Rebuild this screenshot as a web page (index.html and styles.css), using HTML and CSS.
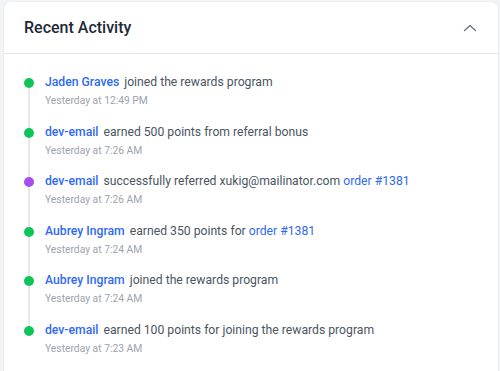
FILE: index.html
```html
<!DOCTYPE html>
<html>
<head>
<meta charset="utf-8">
<link rel="stylesheet" href="styles.css">
</head>
<body>
<section class="card">
  <header class="card-header">
    <h2 class="title">Recent Activity</h2>
    <svg class="chevron" width="14" height="14" viewBox="0 0 14 14"><path d="M1.5 9.5 L7 4.5 L12.5 9.5" fill="none" stroke="#6b7280" stroke-width="1.3" stroke-linecap="round" stroke-linejoin="round"/></svg>
  </header>
  <ul class="timeline">
    <li class="item">
      <span class="dot green"></span>
      <div class="body">
        <p class="line"><a class="link">Jaden Graves</a> joined the rewards program</p>
        <p class="time">Yesterday at 12:49 PM</p>
      </div>
    </li>
    <li class="item">
      <span class="dot green"></span>
      <div class="body">
        <p class="line"><a class="link">dev-email</a> earned 500 points from referral bonus</p>
        <p class="time">Yesterday at 7:26 AM</p>
      </div>
    </li>
    <li class="item">
      <span class="dot purple"></span>
      <div class="body">
        <p class="line"><a class="link">dev-email</a> successfully referred xukig@mailinator.com <a class="link plain">order #1381</a></p>
        <p class="time">Yesterday at 7:26 AM</p>
      </div>
    </li>
    <li class="item">
      <span class="dot green"></span>
      <div class="body">
        <p class="line"><a class="link">Aubrey Ingram</a> earned 350 points for <a class="link plain">order #1381</a></p>
        <p class="time">Yesterday at 7:24 AM</p>
      </div>
    </li>
    <li class="item">
      <span class="dot green"></span>
      <div class="body">
        <p class="line"><a class="link">Aubrey Ingram</a> joined the rewards program</p>
        <p class="time">Yesterday at 7:24 AM</p>
      </div>
    </li>
    <li class="item last">
      <span class="dot green"></span>
      <div class="body">
        <p class="line"><a class="link">dev-email</a> earned 100 points for joining the rewards program</p>
        <p class="time">Yesterday at 7:23 AM</p>
      </div>
    </li>
  </ul>
</section>
</body>
</html>
```

FILE: styles.css
```css
* { box-sizing: border-box; }
html, body { margin: 0; padding: 0; }
body {
  background: #f3f4f6;
  font-family: Roboto, "Noto Sans", sans-serif;
  padding: 1px 0 0 3px;
  overflow: hidden;
  height: 371px;
}
.card {
  background: #fff;
  width: 496px;
  height: 380px;
  border: 1px solid #eceef1;
  border-radius: 8px;
}
.card-header {
  height: 52px;
  display: flex;
  align-items: center;
  justify-content: space-between;
  padding: 0 21px 0 20px;
  border-bottom: 1px solid #e5e7eb;
}
.title {
  margin: 0;
  font-size: 16px;
  font-weight: 500;
  color: #1f2937;
}
.timeline {
  list-style: none;
  margin: 0;
  padding: 19px 0 0 20px;
}
.item {
  position: relative;
  display: flex;
  gap: 11px;
  height: 49.5px;
}
.item::before {
  content: "";
  position: absolute;
  left: 4px;
  top: 14px;
  bottom: -6px;
  width: 2px;
  background: #e5e7eb;
}
.item.last::before { display: none; }
.dot {
  width: 10px;
  height: 10px;
  border-radius: 50%;
  margin-top: 5px;
  flex: none;
  position: relative;
  z-index: 1;
}
.dot.green { background: #10c45c; }
.dot.purple { background: #a44ff0; }
.body { min-width: 0; }
.line {
  margin: 0;
  font-size: 12.2px;
  line-height: 19px;
  color: #4b5563;
  white-space: nowrap;
}
.link {
  color: #2f6af5;
  font-weight: 500;
  margin-right: 2px;
}
.link.plain { font-weight: 400; }
.time {
  margin: 0;
  font-size: 10.3px;
  line-height: 17px;
  color: #9ca3af;
}
```
